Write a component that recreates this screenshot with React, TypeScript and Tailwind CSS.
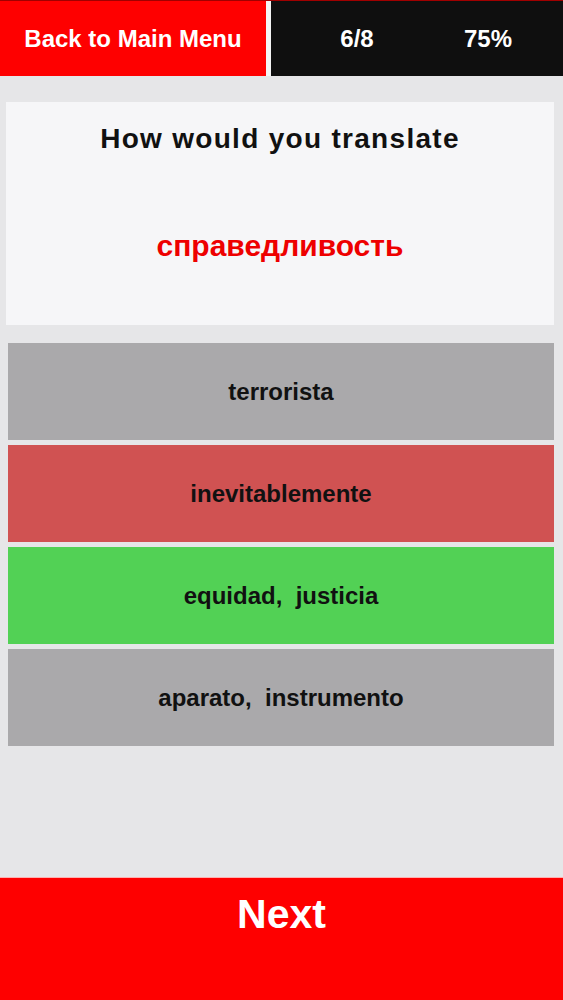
import React from "react";

const options = [
  { label: "terrorista", bg: "bg-[#aaa9ab]" },
  { label: "inevitablemente", bg: "bg-[#d05252]" },
  { label: "equidad,  justicia", bg: "bg-[#52d155]" },
  { label: "aparato,  instrumento", bg: "bg-[#aaa9ab]" },
];

export default function App() {
  return (
    <div
      className="w-[563px] h-[1000px] bg-[#e6e6e8] flex flex-col overflow-hidden"
      style={{ fontFamily: '"Liberation Sans", Arial, sans-serif' }}
    >
      {/* Header */}
      <div className="h-[76px] flex shrink-0 border-t border-[#a00000]">
        <div className="w-[266px] bg-[#fe0000] flex items-center justify-center text-white font-bold text-[24px] leading-none">
          Back to Main Menu
        </div>
        <div className="w-[5px] bg-[#f4f4f4]" />
        <div className="flex-1 bg-[#0f0f0f] flex items-center text-white font-bold text-[24px] leading-none">
          <div className="w-[172px] flex justify-center">6/8</div>
          <div className="w-[90px] flex justify-center">75%</div>
        </div>
      </div>

      {/* Question card */}
      <div className="mt-[26px] ml-[6px] mr-[9px] h-[223px] bg-[#f6f6f8] flex flex-col shrink-0">
        <div className="h-[74px] flex items-center justify-center text-[#111] font-bold text-[28px] tracking-[1.3px] leading-none">
          How would you translate
        </div>
        <div className="h-[140px] flex items-center justify-center text-[#ee0000] font-bold text-[30px] leading-none">
          справедливость
        </div>
      </div>

      {/* Options */}
      <div className="mt-[18px] ml-[8px] mr-[9px] flex flex-col gap-[5px] shrink-0">
        {options.map((o) => (
          <div
            key={o.label}
            className={`h-[97px] ${o.bg} flex items-center justify-center text-[#111] font-bold text-[24px] leading-none whitespace-pre`}
          >
            {o.label}
          </div>
        ))}
      </div>

      <div className="flex-1" />

      {/* Next */}
      <div className="h-[123px] bg-[#fe0000] border-t border-[#ffb0b0] shrink-0 flex flex-col">
        <div className="h-[72px] flex items-center justify-center text-white font-bold text-[41px] leading-none">
          Next
        </div>
      </div>
    </div>
  );
}
